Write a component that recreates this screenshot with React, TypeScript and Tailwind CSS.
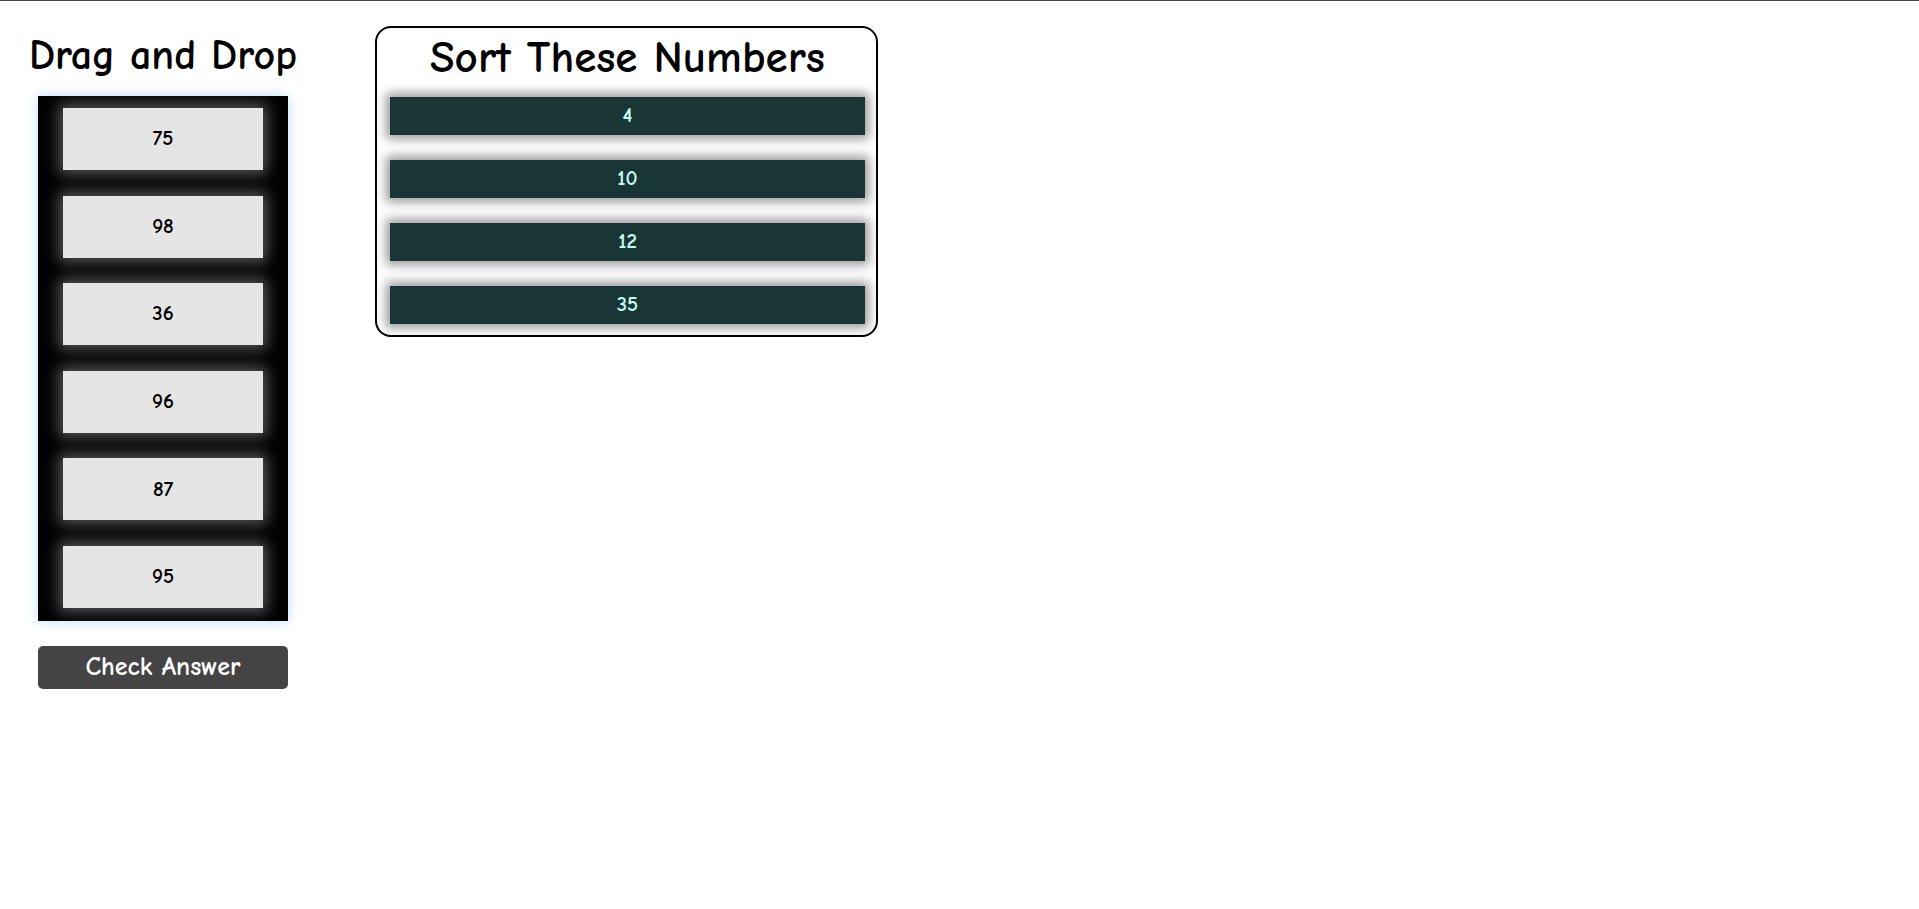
import React from 'react'

const font = { fontFamily: '"Comic Sans MS", "Comic Neue", "Open Sans", sans-serif' }

const pool = [75, 98, 36, 96, 87, 95]
const sorted = [4, 10, 12, 35]

const App: React.FC = () => {
  return (
    <div className="min-h-[909px] w-full border-t border-[#444] bg-white" style={font}>
      <div className="flex items-start">
        {/* left column */}
        <div className="ml-[38px] flex w-[250px] flex-col items-center">
          <h1 className="mt-[31px] whitespace-nowrap text-[42px] font-bold leading-[48px] text-black">Drag and Drop</h1>
          <div className="mt-[16px] flex w-[250px] flex-col items-center gap-[25.6px] bg-black pt-[12px] pb-[13px] shadow-[0_0_12px_#bcdcff]">
            {pool.map(n => (
              <div
                key={n}
                className="flex h-[62px] w-[200px] items-center justify-center bg-[#e5e5e5] text-[21px] font-bold text-black shadow-[0_0_14px_4px_rgba(255,255,255,0.35)]"
              >
                {n}
              </div>
            ))}
          </div>
          <button className="mt-[25px] h-[43px] w-[250px] rounded-[5px] bg-[#444] text-[26px] font-bold text-white">
            Check Answer
          </button>
        </div>

        {/* right panel */}
        <div className="ml-[87px] mt-[25px] w-[503px] rounded-[16px] border-2 border-black pl-[13px] pr-[11px] pb-[11px]">
          <h2 className="pt-[5px] text-center text-[45px] font-bold leading-[48px] text-black">Sort These Numbers</h2>
          <div className="mt-[16px] flex flex-col gap-[25px]">
            {sorted.map(n => (
              <div
                key={n}
                className="flex h-[38px] items-center justify-center bg-[#193536] text-[21px] font-bold text-[#c4fbef] shadow-[0_0_10px_4px_rgba(0,0,0,0.4)]"
              >
                {n}
              </div>
            ))}
          </div>
        </div>
      </div>
    </div>
  )
}

export default App
